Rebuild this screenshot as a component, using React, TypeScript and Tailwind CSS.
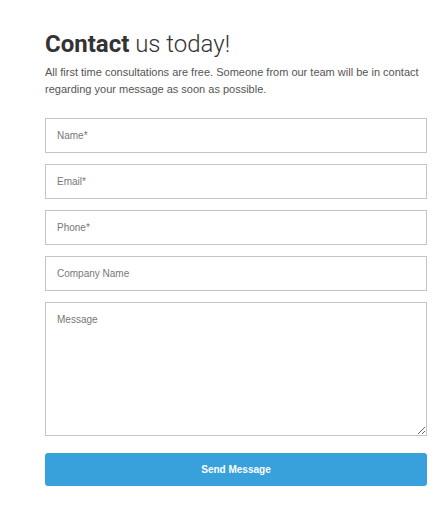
import React from "react";

const fields = ["Name*", "Email*", "Phone*", "Company Name"];

const App = () => {
  return (
    <div className="w-[446px] h-[512px] bg-white pl-[45px] pr-[19px] pt-[27px]">
      <h1
        className="text-[24px] leading-[34px] text-[#333] font-light"
        style={{ fontFamily: "Roboto, sans-serif" }}
      >
        <span className="font-bold">Contact</span> us today!
      </h1>
      <p
        className="mt-[3px] text-[11px] leading-[17px] text-[#555]"
        style={{ fontFamily: "'Liberation Sans', Arial, sans-serif" }}
      >
        All first time consultations are free. Someone from our team will be in contact regarding your message as soon as possible.
      </p>
      <form
        className="mt-[20px] flex flex-col gap-[11px]"
        style={{ fontFamily: "'Liberation Sans', Arial, sans-serif" }}
      >
        {fields.map((f) => (
          <input
            key={f}
            placeholder={f}
            className="w-[382px] h-[35px] border border-[#c4c4c4] px-[11px] text-[10px] text-[#555] placeholder:text-[#777] outline-none"
          />
        ))}
        <textarea
          placeholder="Message"
          className="w-[382px] h-[134px] border border-[#c4c4c4] px-[11px] pt-[9px] text-[10px] text-[#555] placeholder:text-[#777] outline-none"
        />
        <button
          type="button"
          className="mt-[6px] w-[382px] h-[33px] rounded-[3px] bg-[#38a1db] text-white text-[10px] font-bold"
        >
          Send Message
        </button>
      </form>
    </div>
  );
};

export default App;
